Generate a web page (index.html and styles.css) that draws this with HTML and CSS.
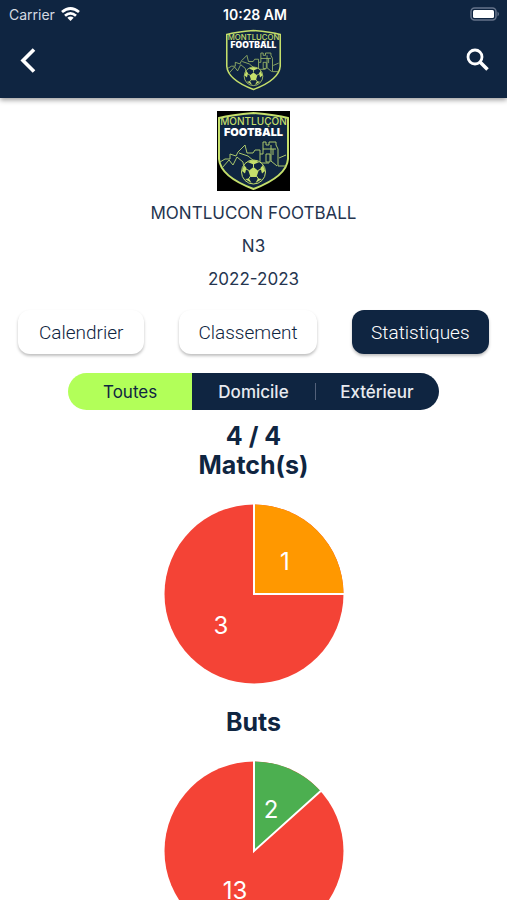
FILE: index.html
```html
<!DOCTYPE html>
<html lang="fr">
<head>
  <meta charset="UTF-8">
  <meta name="viewport" content="width=device-width, initial-scale=1">
  <title>Montluçon Football</title>
  <link rel="stylesheet" href="styles.css">
</head>
<body>

  <header class="header">
    <div class="status-bar">
      <div class="carrier">
        <span>Carrier</span>
        <svg width="19" height="14" viewBox="0 0 19 14" aria-hidden="true">
          <g fill="none" stroke="#fff" stroke-width="2.800">
            <path d="M1 5 Q9.500 -2 18 5"/>
            <path d="M4 8.800 Q9.500 4 15 8.800"/>
          </g>
          <path d="M6.300 10.800 Q9.500 8.300 12.700 10.800 L9.500 14 Z" fill="#fff"/>
        </svg>
      </div>
      <span class="time">10:28 AM</span>
      <svg class="battery" width="31" height="14" viewBox="0 0 31 14" aria-hidden="true">
        <rect x="1" y="1" width="25" height="12" rx="3.500" fill="none" stroke="#65738a" stroke-width="1.500"/>
        <rect x="3" y="3" width="21" height="8" rx="1.500" fill="#fff"/>
        <path d="M27.500 4.500 Q30.500 7 27.500 9.500 Z" fill="#65738a"/>
      </svg>
    </div>
    <div class="app-bar">
      <button class="icon-btn" type="button" aria-label="Retour">
        <svg width="36" height="36" viewBox="0 0 36 36"><path d="M24 7.500 L13 18.500 L24 29.500" fill="none" stroke="#fff" stroke-width="3.600"/></svg>
      </button>
      <svg class="header-crest" width="57" height="62" viewBox="0 0 73 80"><use href="#crest"/></svg>
      <button class="icon-btn" type="button" aria-label="Rechercher">
        <svg width="36" height="36" viewBox="0 0 36 36"><circle cx="14" cy="15" r="7" fill="none" stroke="#fff" stroke-width="2.800"/><path d="M19 20 L26.500 27.500" stroke="#fff" stroke-width="3.500"/></svg>
      </button>
    </div>
  </header>

  <main class="content">
    <section class="team">
      <!-- Club crest, the header reuses this group -->
      <svg class="team-crest" width="73" height="80" viewBox="0 0 73 80">
        <g id="crest">
          <path d="M2 7 C14 4 25 3 36.500 2 C48 3 59 4 71 7 V48 C70 61 55 71 36.500 78 C18 71 3 61 2 48 Z" fill="#0f2541" stroke="#c5df6b" stroke-width="2"/>
          <text class="crest-name" x="36.500" y="14" text-anchor="middle">MONTLUÇON</text>
          <text class="crest-sport" x="36.500" y="25" text-anchor="middle">FOOTBALL</text>
          <g fill="none" stroke="#a9c66c" stroke-width="1">
            <path d="M3 51 L8 48 H13 V43 L19 45 L21 41 L28 34 L30 42 H36 L38 39 H43 V43 H46 V31 H49 V34 H52 V31 H59 V34 L61 38 V55 H69"/>
            <path d="M5 57 L12 49 L16 54 L20 46 L26 51 L27 58 M22 42 L31 45 L37 50 M43 43 V52 H52 M46 38 H59 M54 34 V50 L60 55 M49 43 H53 V51 H49 Z M56 38 V44 M62 47 L69 44"/>
          </g>
          <circle cx="36.500" cy="61" r="12" fill="#0f2541" stroke="#c5df6b" stroke-width="1"/>
          <g fill="#c5df6b">
            <path d="M36.500 56 L41.500 60 L39.500 66 H33.500 L31.500 60 Z"/>
            <path d="M30.500 51 L36.500 49 L42.500 51 L36.500 53.500 Z"/>
            <path d="M25 60 L27 54 L29.500 57 L28 62.500 Z"/>
            <path d="M48 60 L46 54 L43.500 57 L45 62.500 Z"/>
            <path d="M28 68 L32 67.500 L34.500 72 Z"/>
            <path d="M45 68 L41 67.500 L38.500 72 Z"/>
          </g>
          <path d="M36.500 56 V53 M41 59.500 L44 58 M39.500 65 L41.500 68 M33.500 65 L31.500 68 M32 59.500 L29 58" stroke="#c5df6b" stroke-width="1"/>
        </g>
      </svg>
      <p>MONTLUCON FOOTBALL</p>
      <p>N3</p>
      <p>2022-2023</p>
    </section>

    <nav class="tabs">
      <button class="tab tab-short" type="button">Calendrier</button>
      <button class="tab" type="button">Classement</button>
      <button class="tab active" type="button">Statistiques</button>
    </nav>

    <div class="filter">
      <input type="radio" name="lieu" id="toutes" checked>
      <label for="toutes">Toutes</label>
      <input type="radio" name="lieu" id="domicile">
      <label for="domicile">Domicile</label>
      <input type="radio" name="lieu" id="exterieur">
      <label for="exterieur">Extérieur</label>
    </div>

    <section class="stat">
      <h2>4 / 4<br>Match(s)</h2>
      <svg class="pie" width="180" height="180" viewBox="0 0 180 180">
        <circle class="lost" cx="90" cy="90" r="89.500"/>
        <path class="draw" d="M90 90 V0.500 A89.500 89.500 0 0 1 179.500 90 Z"/>
        <path class="split" d="M90 0 V90 H180"/>
        <text x="121" y="66">1</text>
        <text x="57" y="130">3</text>
      </svg>
    </section>

    <section class="stat">
      <h2>Buts</h2>
      <svg class="pie" width="180" height="180" viewBox="0 0 180 180">
        <circle class="lost" cx="90" cy="90" r="89.500"/>
        <path class="won" d="M90 90 V0.500 A89.500 89.500 0 0 1 156.500 30.100 Z"/>
        <path class="split" d="M90 0 V90 L157 29.700"/>
        <text x="107" y="57">2</text>
        <text x="71" y="138">13</text>
      </svg>
    </section>
  </main>

</body>
</html>
```

FILE: styles.css
```css
* {
  margin: 0;
  padding: 0;
  box-sizing: border-box;
}

body {
  display: flex;
  flex-direction: column;
  height: 100vh;
  overflow: hidden;
  font-family: Inter, "Liberation Sans", sans-serif;
  color: #0f2541;
  background: #fff;
}

button {
  border: none;
  background: none;
  font: inherit;
  color: inherit;
  cursor: pointer;
}

svg {
  display: block;
}

.crest-name {
  font-size: 10px;
  font-weight: 500;
  line-height: 10px;
  fill: #c5df6b;
}

.crest-sport {
  font-size: 11px;
  font-weight: 900;
  line-height: 11px;
  fill: #fff;
}

/* Header */
.header {
  flex: none;
  position: relative;
  color: #fff;
  background: #0f2541;
  box-shadow: 0 2px 5px rgba(0, 0, 0, 0.4);
}

.status-bar {
  display: grid;
  grid-template-columns: 1fr auto 1fr;
  align-items: center;
  height: 28px;
  padding: 0 6px 0 9px;
  font-size: 14px;
}

.carrier {
  display: flex;
  align-items: center;
  gap: 6px;
  color: #d5dae1;
}

.time {
  font-weight: 600;
}

.battery {
  justify-self: end;
}

.app-bar {
  display: flex;
  align-items: center;
  justify-content: space-between;
  height: 70px;
  padding: 0 10px;
}

.header-crest,
.icon-btn {
  margin-top: -7px;
}

.icon-btn {
  width: 36px;
  height: 36px;
}

/* Team */
.content {
  flex: 1;
  min-height: 0;
  overflow: auto;
  scrollbar-width: none;
  padding-top: 13px;
}

.team {
  font-size: 17px;
  line-height: 33px;
  text-align: center;
  color: #25354f;
}

.team-crest {
  margin: 0 auto 6px;
  background: #000;
}

.tabs {
  display: flex;
  gap: 35px;
  margin: 14px 18px 19px;
}

.tab {
  flex: 137;
  height: 44px;
  border-radius: 12px;
  background: #fff;
  box-shadow: 0 2px 3px rgba(0, 0, 0, 0.25);
  font-family: Roboto, sans-serif;
  font-size: 19px;
  font-weight: 300;
  color: #0f2541;
}

.tab-short {
  flex: 126;
}

.tab.active {
  color: #fff;
  background: #0f2541;
}

/* Filter */
.filter {
  display: flex;
  width: 73%;
  height: 37px;
  margin: 0 auto 12px;
  border-radius: 19px;
  overflow: hidden;
}

.filter input {
  position: absolute;
  opacity: 0;
}

.filter label {
  flex: 1;
  display: flex;
  align-items: center;
  justify-content: center;
  font-size: 17px;
  font-weight: 500;
  color: #e8ebf0;
  background: #0f2541;
  cursor: pointer;
}

.filter label:last-child {
  background: linear-gradient(#53617a, #53617a) left center / 1px 17px no-repeat #0f2541;
}

.filter input:checked + label {
  font-weight: 400;
  color: #0f2541;
  background: #b2ff59;
}

/* Stats */
.stat h2 {
  margin-bottom: 24px;
  font-size: 25px;
  font-weight: 700;
  line-height: 29px;
  text-align: center;
}

.pie {
  margin: 0 auto 24px;
}

.pie text {
  font-size: 24px;
  fill: #fff;
  text-anchor: middle;
}

.lost {
  fill: #f44336;
}

.draw {
  fill: #ff9800;
}

.won {
  fill: #4caf50;
}

.split {
  fill: none;
  stroke: #fff;
  stroke-width: 2;
}
```
